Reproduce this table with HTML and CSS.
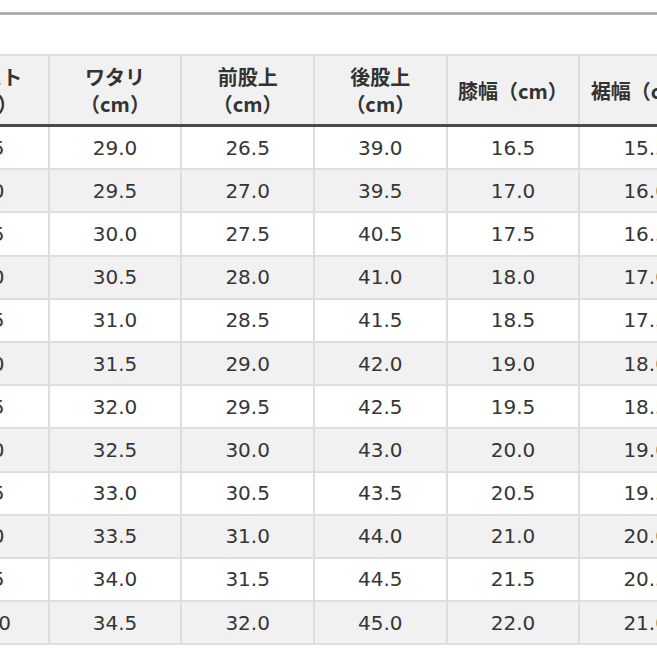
FILE: index.html
```html
<!DOCTYPE html>
<html lang="ja">
<head>
<meta charset="utf-8">
<link rel="stylesheet" href="styles.css">
</head>
<body>
<div class="rule"></div>
<div class="wrap">
<table class="size">
<thead>
<tr>
<th>ウエスト<br>（cm）</th>
<th>ワタリ<br>（cm）</th>
<th>前股上<br>（cm）</th>
<th>後股上<br>（cm）</th>
<th>膝幅（cm）</th>
<th>裾幅（cm）</th>
</tr>
</thead>
<tbody>
<tr><td>72.5</td><td>29.0</td><td>26.5</td><td>39.0</td><td>16.5</td><td>15.5</td></tr>
<tr><td>75.0</td><td>29.5</td><td>27.0</td><td>39.5</td><td>17.0</td><td>16.0</td></tr>
<tr><td>77.5</td><td>30.0</td><td>27.5</td><td>40.5</td><td>17.5</td><td>16.5</td></tr>
<tr><td>80.0</td><td>30.5</td><td>28.0</td><td>41.0</td><td>18.0</td><td>17.0</td></tr>
<tr><td>82.5</td><td>31.0</td><td>28.5</td><td>41.5</td><td>18.5</td><td>17.5</td></tr>
<tr><td>85.0</td><td>31.5</td><td>29.0</td><td>42.0</td><td>19.0</td><td>18.0</td></tr>
<tr><td>87.5</td><td>32.0</td><td>29.5</td><td>42.5</td><td>19.5</td><td>18.5</td></tr>
<tr><td>90.0</td><td>32.5</td><td>30.0</td><td>43.0</td><td>20.0</td><td>19.0</td></tr>
<tr><td>92.5</td><td>33.0</td><td>30.5</td><td>43.5</td><td>20.5</td><td>19.5</td></tr>
<tr><td>95.0</td><td>33.5</td><td>31.0</td><td>44.0</td><td>21.0</td><td>20.0</td></tr>
<tr><td>97.5</td><td>34.0</td><td>31.5</td><td>44.5</td><td>21.5</td><td>20.5</td></tr>
<tr><td>100.0</td><td>34.5</td><td>32.0</td><td>45.0</td><td>22.0</td><td>21.0</td></tr>
</tbody>
</table>
</div>
</body>
</html>
```

FILE: styles.css
```css
html, body {
  margin: 0;
  padding: 0;
  background: #ffffff;
}
body {
  width: 657px;
  height: 657px;
  overflow: hidden;
  font-family: "DejaVu Sans", "Noto Sans CJK JP", sans-serif;
  color: #333333;
}
.rule {
  margin-top: 12px;
  height: 3px;
  background: linear-gradient(#c4c4c4, #a0a0a0 50%, #c4c4c4);
}
.wrap {
  margin-top: 39px;
  overflow: hidden;
}
.size {
  border-collapse: collapse;
  table-layout: fixed;
  width: 798px;
  margin-left: -85px;
}
.size th,
.size td {
  text-align: center;
  border: 2px solid #dedede;
  padding: 0;
}
.size th {
  height: 68px;
  background: #f1f1f1;
  font-family: "Noto Sans CJK JP", sans-serif;
  font-weight: 700;
  font-size: 20px;
  line-height: 27px;
  color: #333333;
  border-bottom: 3px solid #4a4a4a;
}
.size td {
  height: 41.2px;
  font-size: 20px;
  color: #363636;
}
.size tbody tr:nth-child(even) td {
  background: #f1f1f1;
}
```
